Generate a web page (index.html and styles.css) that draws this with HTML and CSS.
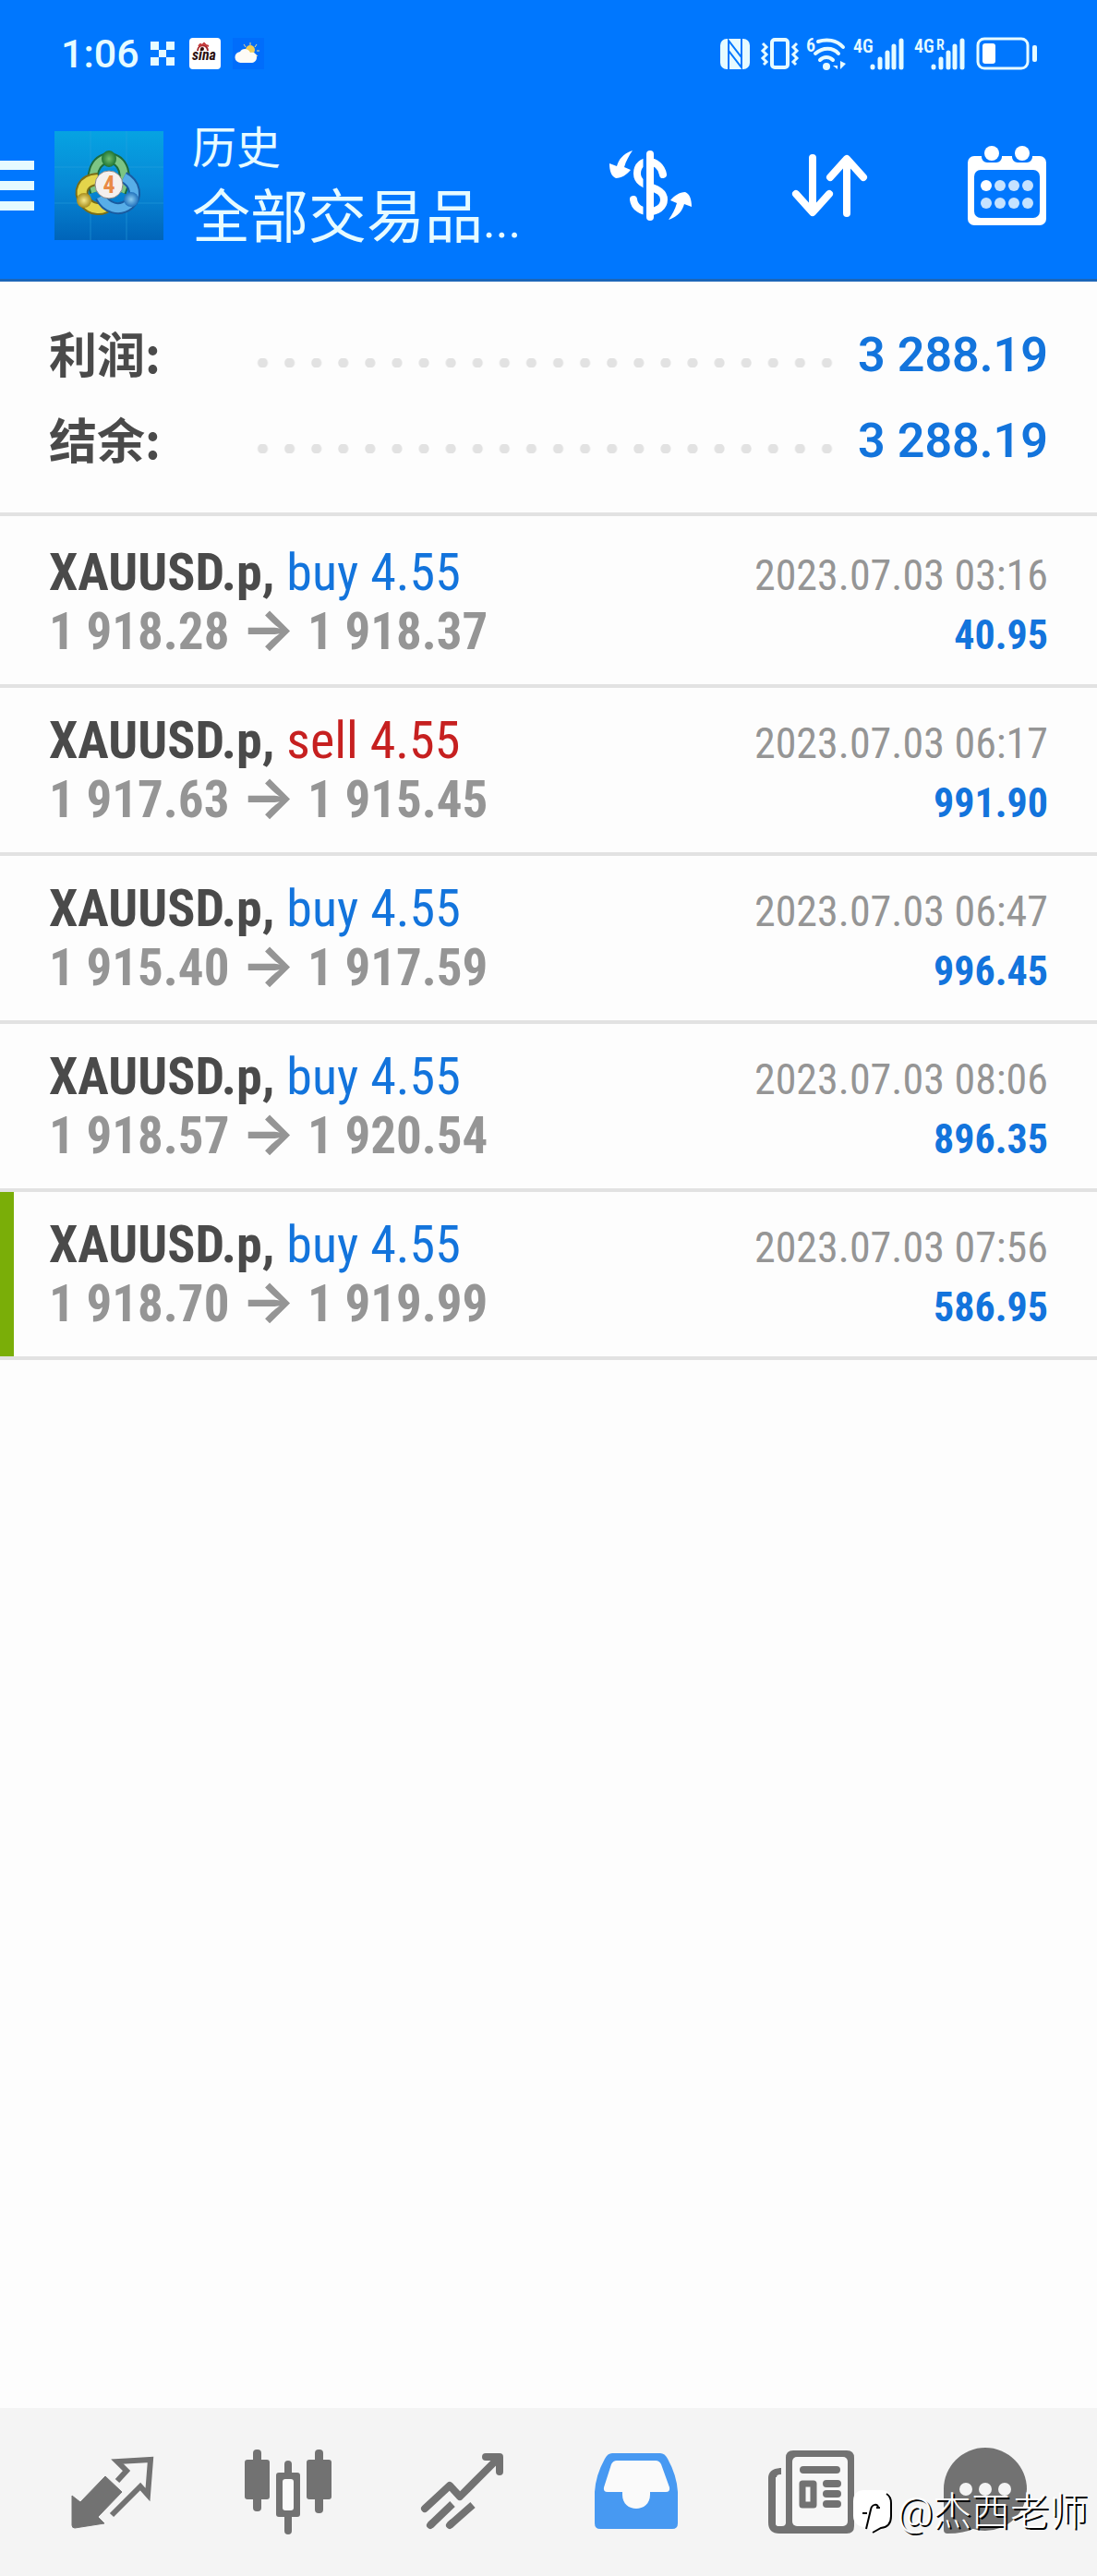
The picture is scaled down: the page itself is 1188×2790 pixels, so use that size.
FILE: index.html
```html
<!DOCTYPE html>
<html lang="zh-CN">
<head>
  <meta charset="UTF-8">
  <meta name="viewport" content="width=device-width, initial-scale=1">
  <title>历史</title>
  <link rel="stylesheet" href="styles.css">
</head>
<body>

<header class="top">
  <div class="status">
    <span class="time">1:06</span>
    <svg class="s-grid" width="26" height="26" viewBox="0 0 26 26"><path fill="#e6fbff" d="M0 0h9v9H0zM17 0h9v9h-9zM9 9h8v8H9zM0 17h9v9H0zM17 17h9v9h-9z"/></svg>
    <svg class="s-sina" width="34" height="34" viewBox="0 0 34 34">
      <rect width="34" height="34" rx="4" fill="#fff"/>
      <path d="M9 14C9 7 20 6 20 14" fill="none" stroke="#a3262a" stroke-width="2"/>
      <path d="M10 9l2-2 2 1 2-2 2 2 3 1" fill="none" stroke="#c5393a" stroke-width="2"/>
      <circle cx="14" cy="12" r="2" fill="#3a1010"/>
      <text x="3" y="24" font-size="16" font-weight="700" font-style="italic" fill="#2b0f10">sina</text>
    </svg>
    <svg class="s-weather" width="34" height="34" viewBox="0 0 34 34">
      <rect width="34" height="34" fill="#006dfb"/>
      <path d="M19 5v3M26 7l-2 3M12 7l2 3M29 14h-3M27 20l-2-2" stroke="#f6d983" stroke-width="1"/>
      <circle cx="19" cy="13" r="5" fill="#f3cd55"/>
      <path d="M9 27a6 6 0 0 1-1-12c2-4 9-4 11 1 4-1 7 1 7 5 0 4-3 6-6 6z" fill="#fdfbf6"/>
    </svg>
    <span class="spring"></span>
    <svg class="s-nfc" width="32" height="33" viewBox="0 0 32 33">
      <rect width="32" height="33" rx="7" fill="#e6fbff"/>
      <path d="M9 33V2l14 18V5M23 0v31L9 13v16" fill="none" stroke="#0077fe" stroke-width="2"/>
    </svg>
    <svg class="s-vibrate" width="41" height="34" viewBox="0 0 41 34" fill="none" stroke="#e6fbff">
      <rect x="12" y="2" width="17" height="30" rx="3" stroke-width="4"/>
      <path d="M2 6l4 4-4 4 4 4-4 4 4 4-3 3M39 6l-4 4 4 4-4 4 4 4-4 4 3 3" stroke-width="3"/>
    </svg>
    <svg class="s-wifi" width="44" height="35" viewBox="0 0 44 35" fill="none" stroke="#e6fbff">
      <path d="M13 4C22 1 33 2 40 10M10 17C18 10 29 10 35 17M15 24c4-4 10-4 14 0" stroke-width="4" stroke-linecap="round"/>
      <circle cx="22" cy="31" r="4" fill="#e6fbff" stroke="none"/>
      <path d="M34 25v9l-5-4h5zM37 25v9l6-6z" fill="#e6fbff" stroke="none"/>
      <text x="0" y="15" font-size="20" font-weight="600" fill="#e6fbff" stroke="none">6</text>
    </svg>
    <svg class="s-signal" width="55" height="35" viewBox="0 0 55 35" stroke="#e6fbff" stroke-width="5" stroke-linecap="round">
      <text x="0" y="16" font-size="20" font-weight="600" fill="#e6fbff" stroke="none">4G</text>
      <path d="M21 31v1M29 23v9M37 16v16M44 9v23M52 3v29"/>
    </svg>
    <svg class="s-signal" width="55" height="35" viewBox="0 0 55 35" stroke="#e6fbff" stroke-width="5" stroke-linecap="round">
      <text x="0" y="16" font-size="20" font-weight="600" fill="#e6fbff" stroke="none">4G</text>
      <text x="24" y="13" font-size="16" font-weight="600" fill="#e6fbff" stroke="none">R</text>
      <path d="M21 31v1M29 23v9M37 16v16M44 9v23M52 3v29"/>
    </svg>
    <svg class="s-battery" width="65" height="34" viewBox="0 0 65 34">
      <rect x="1" y="1" width="54" height="32" rx="7" fill="none" stroke="#e6fbff" stroke-width="3"/>
      <rect x="6" y="6" width="14" height="22" rx="3" fill="#fff"/>
      <rect x="60" y="8" width="5" height="18" rx="2" fill="#e6fbff"/>
    </svg>
  </div>

  <div class="toolbar">
    <button class="menu" aria-label="菜单"><i></i><i></i><i></i></button>
    <svg class="logo" width="118" height="118" viewBox="0 0 118 118">
      <defs>
        <linearGradient id="sky" x1="0" y1="0" x2="0" y2="1">
          <stop offset="0" stop-color="#06a3e2"/>
          <stop offset="0.5" stop-color="#0789d6"/>
          <stop offset="1" stop-color="#0064b9"/>
        </linearGradient>
        <radialGradient id="green"><stop offset="0" stop-color="#6fbf70"/><stop offset="1" stop-color="#1f7434"/></radialGradient>
        <radialGradient id="gold"><stop offset="0" stop-color="#f6ea8c"/><stop offset="1" stop-color="#a78d1d"/></radialGradient>
        <radialGradient id="blue"><stop offset="0" stop-color="#8accf0"/><stop offset="1" stop-color="#2272bd"/></radialGradient>
      </defs>
      <rect width="118" height="118" fill="url(#sky)"/>
      <path d="M39 0v118M78 0v118M0 39h118M0 78h118" stroke="#2ea3e0" stroke-opacity=".5"/>
      <path d="M44 66C38 48 43 31 59 29c16 2 21 19 13 37" fill="none" stroke="#1d6b3d" stroke-width="12"/>
      <path d="M44 66C38 48 43 31 59 29c16 2 21 19 13 37" fill="none" stroke="#7cc584" stroke-width="8"/>
      <path d="M47 52C30 53 26 66 33 76c6 9 18 11 27 3" fill="none" stroke="#7a6d16" stroke-width="14"/>
      <path d="M47 52C30 53 26 66 33 76c6 9 18 11 27 3" fill="none" stroke="#e3d54b" stroke-width="10"/>
      <path d="M50 71c6 12 20 17 31 8 9-8 7-22-6-29" fill="none" stroke="#1a5ba0" stroke-width="13"/>
      <path d="M50 71c6 12 20 17 31 8 9-8 7-22-6-29" fill="none" stroke="#58aee8" stroke-width="9"/>
      <ellipse cx="59" cy="30" rx="8" ry="9" fill="url(#green)"/>
      <circle cx="32" cy="75" r="8" fill="url(#gold)"/>
      <circle cx="83" cy="74" r="8" fill="url(#blue)"/>
      <circle cx="59" cy="58" r="15" fill="#f4f0ee" stroke="#8f8a86"/>
      <text x="59" y="67" text-anchor="middle" font-size="26" font-weight="700" fill="#e98a45">4</text>
    </svg>
    <div class="titles">
      <h1>历史</h1>
      <p>全部交易品<span>...</span></p>
    </div>
    <div class="actions">
      <button aria-label="货币">
        <svg width="90" height="76" viewBox="0 0 90 76" fill="none" stroke="#fff" stroke-linecap="round">
          <path d="M58 26C55 8 30 7 30 25c0 17 29 12 29 28 0 17-31 18-33 0" stroke-width="8"/>
          <path d="M42 2v72" stroke="#0077fe" stroke-width="11"/>
          <path d="M44 4v68" stroke-width="8"/>
          <path id="swap" fill="#fff" stroke="none" d="M25 0C14 4 10 10 8 17L0 14c0 8 2 14 7 16 6 0 12-4 16-9l-7-3c2-7 5-12 9-18z"/>
          <use href="#swap" transform="rotate(180 44.5 37.5)"/>
        </svg>
      </button>
      <button aria-label="排序">
        <svg width="82" height="68" viewBox="0 0 82 68" fill="none" stroke="#fff" stroke-width="8" stroke-linecap="round" stroke-linejoin="round">
          <path d="M22 4v58M4 43l18 20 18-20M59 64V6M41 25L59 5l18 20"/>
        </svg>
      </button>
      <button aria-label="日期">
        <svg width="85" height="86" viewBox="0 0 85 86">
          <rect y="11" width="85" height="75" rx="7" fill="#fff"/>
          <rect x="7" y="26" width="71" height="52" rx="7" fill="#0077fe"/>
          <path d="M15 8v4a6 6 0 0 0 6 6h10a6 6 0 0 0 6-6V8zM48 8v4a6 6 0 0 0 6 6h10a6 6 0 0 0 6-6V8z" fill="#0077fe"/>
          <g fill="#fff"><circle cx="26" cy="8" r="8"/><circle cx="59" cy="8" r="8"/><circle cx="20" cy="43" r="6"/></g>
          <g fill="#c5e2ff">
            <circle cx="35" cy="43" r="6"/><circle cx="50" cy="43" r="6"/><circle cx="65" cy="43" r="6"/>
            <circle cx="20" cy="62" r="6"/><circle cx="35" cy="62" r="6"/><circle cx="50" cy="62" r="6"/><circle cx="65" cy="62" r="6"/>
          </g>
        </svg>
      </button>
    </div>
  </div>
</header>

<main>
  <dl class="summary">
    <div><dt>利润:</dt><i class="dots"></i><dd>3 288.19</dd></div>
    <div><dt>结余:</dt><i class="dots"></i><dd>3 288.19</dd></div>
  </dl>

  <ul class="deals">
    <li>
      <div class="line"><span><b>XAUUSD.p,</b> <span class="buy">buy 4.55</span></span><time>2023.07.03 03:16</time></div>
      <div class="line"><span class="price">1 918.28 <i>→</i> 1 918.37</span><span class="profit">40.95</span></div>
    </li>
    <li>
      <div class="line"><span><b>XAUUSD.p,</b> <span class="sell">sell 4.55</span></span><time>2023.07.03 06:17</time></div>
      <div class="line"><span class="price">1 917.63 <i>→</i> 1 915.45</span><span class="profit">991.90</span></div>
    </li>
    <li>
      <div class="line"><span><b>XAUUSD.p,</b> <span class="buy">buy 4.55</span></span><time>2023.07.03 06:47</time></div>
      <div class="line"><span class="price">1 915.40 <i>→</i> 1 917.59</span><span class="profit">996.45</span></div>
    </li>
    <li>
      <div class="line"><span><b>XAUUSD.p,</b> <span class="buy">buy 4.55</span></span><time>2023.07.03 08:06</time></div>
      <div class="line"><span class="price">1 918.57 <i>→</i> 1 920.54</span><span class="profit">896.35</span></div>
    </li>
    <li class="tp">
      <div class="line"><span><b>XAUUSD.p,</b> <span class="buy">buy 4.55</span></span><time>2023.07.03 07:56</time></div>
      <div class="line"><span class="price">1 918.70 <i>→</i> 1 919.99</span><span class="profit">586.95</span></div>
    </li>
  </ul>
</main>

<nav class="tabs">
  <a href="#quotes" aria-label="行情">
    <svg width="90" height="92" viewBox="0 -7 90 92">
      <path d="M36 22l18 17-26 27 7 7-32 5q-3 0-3-3V43l9 7z" fill="#727272" stroke="#727272" stroke-linejoin="round"/>
      <path d="M49 27l10-11L49 6l36-2-3 38-8-9-31 31" fill="none" stroke="#727272" stroke-width="6"/>
    </svg>
  </a>
  <a href="#chart" aria-label="图表">
    <svg width="94" height="92" viewBox="0 0 94 92" fill="#727272">
      <rect y="11" width="27" height="43" rx="3"/><rect x="9" width="9" height="67" rx="4"/>
      <rect x="67" y="11" width="27" height="43" rx="3"/><rect x="76" width="9" height="69" rx="4"/>
      <rect x="34" y="25" width="26" height="48" rx="3"/><rect x="43" y="12" width="8" height="80" rx="4"/>
      <rect x="41" y="32" width="12" height="34" rx="3" fill="#fafafa"/>
    </svg>
  </a>
  <a href="#trade" aria-label="交易">
    <svg width="89" height="92" viewBox="0 -4 89 92" fill="none" stroke="#727272" stroke-width="8" stroke-linecap="round" stroke-linejoin="round">
      <path d="M4 60l27-25 11 12L84 5M70 4h15v16"/>
      <path d="M34 55L10 78M56 56L31 78" stroke-linecap="butt"/>
      <path d="M12 76l-2 2M33 76l-2 2"/>
    </svg>
  </a>
  <a href="#history" aria-label="历史">
    <svg width="90" height="92" viewBox="0 -4 90 92">
      <path d="M19 0h52q5 0 8 6 10 18 11 36v34q0 6-6 6H6q-6 0-6-6V42Q1 24 11 6q3-6 8-6z" fill="#4799f2"/>
      <path d="M24 8h42q4 0 6 4l9 25q1 5-4 5H60v3c0 20-30 20-30 0v-3H14q-5 0-4-5l8-25q2-4 6-4z" fill="#fafafa"/>
    </svg>
  </a>
  <a href="#news" aria-label="新闻">
    <svg width="93" height="92" viewBox="0 -1 93 92">
      <path d="M13 19v6q-5 0-5 4v49q0 4 4 4h3q4 0 4-4V8q0-8 8-8h58q8 0 8 8v74q0 8-8 8H12Q0 90 0 78V30Q0 20 13 19z" fill="#727272"/>
      <rect x="26" y="7" width="60" height="75" rx="5" fill="#f7f7f7"/>
      <rect x="8" y="25" width="6" height="57" rx="3" fill="#f7f7f7"/>
      <path d="M13 17h6v62h-6z" fill="#f4f4f4"/>
      <path d="M13 19v6q-5 0-5 4" fill="none" stroke="#727272" stroke-width="2"/>
      <path d="M38 21h36M63 36h12M63 47h12M63 58h12" stroke="#727272" stroke-width="8" stroke-linecap="round"/>
      <rect x="37" y="36" width="12" height="23" fill="#f7f7f7" stroke="#727272" stroke-width="7" stroke-linejoin="round"/>
    </svg>
  </a>
  <a href="#chat" aria-label="消息">
    <svg width="90" height="92" viewBox="0 -1 90 92">
      <circle cx="45" cy="42" r="45" fill="#727272"/>
      <path d="M0 42v44q0 4 4 4 18 0 30-6z" fill="#727272"/>
      <g fill="#f4f4f4"><circle cx="24" cy="42" r="7"/><circle cx="45" cy="42" r="7"/><circle cx="66" cy="42" r="7"/></g>
    </svg>
  </a>
</nav>

<div class="watermark">
  <svg width="44" height="48" viewBox="0 0 44 48">
    <path d="M12 0h18q12 0 12 12v18q0 11-12 12l-9 5-4-6Q0 40 0 28V12Q0 0 12 0z" fill="#fff"/>
    <path d="M10 25h5M27 19c0-5-7-4-8 2l-5 21M25 19h4M36 4q5 3 5 10v14q0 12-11 13l-9 5" fill="none" stroke="#000" stroke-width="2"/>
  </svg>
  <span>@杰西老师</span>
</div>

</body>
</html>
```
FILE: styles.css
```css
* { box-sizing: border-box; }
body { margin: 0; min-height: 100vh; display: flex; flex-direction: column; position: relative; background: #fdfdfd; color: #4a4a4a; font-family: Roboto, "Noto Sans CJK SC", sans-serif; }
h1, p, dl, dd, ul { margin: 0; padding: 0; font-weight: 400; }
i { font-style: normal; }
svg { display: block; flex: none; overflow: visible; }
svg text { font-family: "Roboto Condensed", Roboto, sans-serif; }
button { padding: 0; border: none; background: none; cursor: pointer; }

.top { background: #0077fe; color: #e6fbff; border-bottom: 3px solid #1c66b8; }
.status { display: flex; align-items: center; height: 116px; padding: 0 65px 0 66px; }
.time { font-size: 43px; font-weight: 500; line-height: 52px; margin-right: 12px; }
.s-sina { margin: 0 13px 0 16px; }
.spring { flex: 1; }
.s-vibrate { margin: 0 8px 0 12px; }
.s-signal { margin: 0 4px 0 7px; }
.s-battery { margin-left: 9px; }

.toolbar { display: flex; align-items: center; height: 186px; padding: 0 55px 16px 0; }
.menu { width: 37px; margin-right: 22px; }
.menu i { display: block; height: 10px; margin: 12px 0; background: #e6fbff; }
.titles { margin-left: 31px; padding-top: 12px; white-space: nowrap; }
.titles h1 { font-size: 48px; line-height: 62px; }
.titles p { font-size: 63px; line-height: 88px; }
.titles span { font-size: 52px; }
.actions { display: flex; gap: 108px; margin-left: auto; }
.actions button { display: flex; align-items: center; }

main { flex: 1; }
.summary { padding: 32px 53px; border-bottom: 4px solid #e2e2e2; height: 254px; }
.summary div { display: flex; align-items: center; height: 93px; font-size: 52px; line-height: 76px; }
.summary dt { width: 217px; padding-bottom: 4px; font-family: "Noto Sans CJK SC", sans-serif; font-weight: 700; }
.summary dd { padding-top: 2px; color: #1374dc; font-weight: 600; }
.dots { flex: 1; height: 10px; margin: 18px 19px 0 0; background: radial-gradient(circle, #e2e2e2 5px, transparent 6px) 0 0 / 29px 10px space; }

.deals { list-style: none; padding-top: 4px; font-family: "Roboto Condensed", "Liberation Sans Narrow", Roboto, sans-serif; font-size: 56px; }
.deals li { padding: 25px 53px; border-bottom: 4px solid #e2e2e2; }
.deals .tp { background: linear-gradient(#7aae08, #7aae08) 0 0 / 15px 100% no-repeat; }
.line { display: flex; justify-content: space-between; align-items: baseline; height: 64px; line-height: 64px; white-space: nowrap; }
.buy { color: #1374dc; }
.sell { color: #c62020; }
.price { color: #959595; font-size: 55px; font-weight: 700; }
.price i { font-family: Inter, sans-serif; font-size: 62px; line-height: 1px; }
.line time { color: #959595; font-size: 46px; }
.profit { color: #1374dc; font-size: 44px; font-weight: 700; }

.tabs { display: flex; height: 182px; padding: 0 27px 0 29px; background: #f4f4f4; }
.tabs a { flex: 1; display: flex; justify-content: center; align-items: flex-start; padding-top: 45px; }

.watermark { position: absolute; right: 10px; bottom: 43px; display: flex; align-items: center; gap: 4px; color: #fff; font-size: 42px; font-weight: 300; line-height: 52px; text-shadow: 2px 2px 0 #000; }
```
